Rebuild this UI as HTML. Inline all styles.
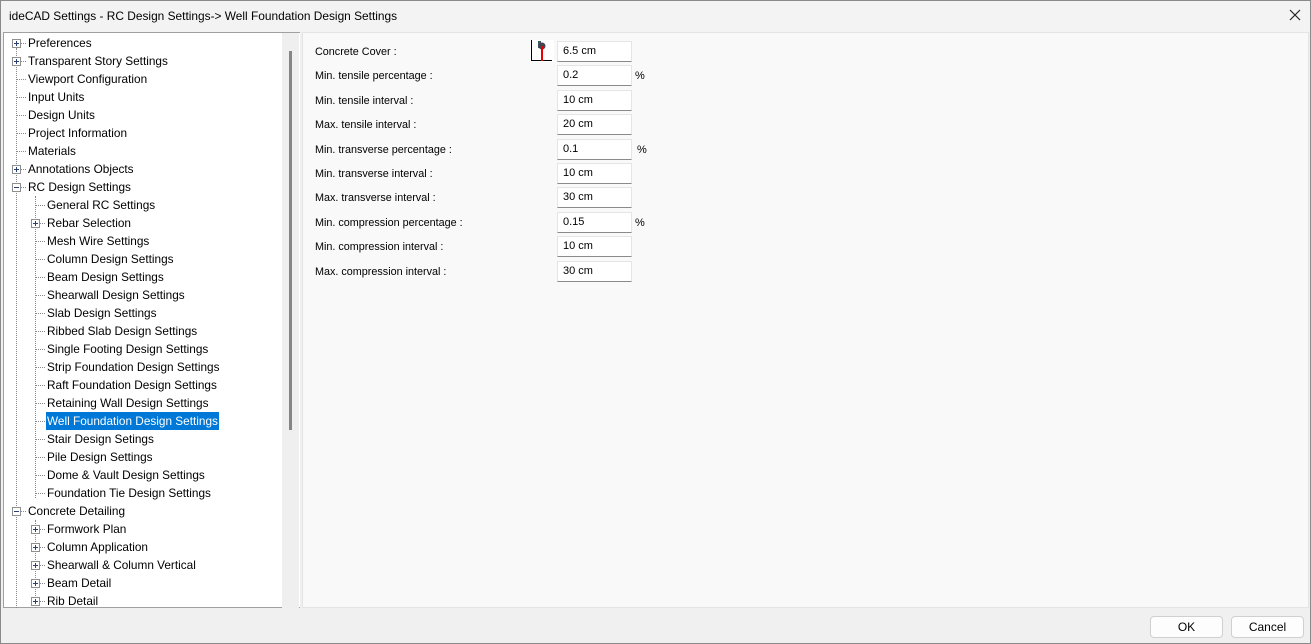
<!DOCTYPE html>
<html><head><meta charset="utf-8"><style>
*{margin:0;padding:0;box-sizing:border-box}
body{width:1311px;height:644px;background:#f0f0f0;font-family:"Liberation Sans",sans-serif;position:relative;overflow:hidden}
.a{position:absolute;white-space:nowrap}
#frame{left:0;top:0;width:1311px;height:644px;border:1px solid #8a8a8a;z-index:5;pointer-events:none}
#title{left:0;top:0;width:1311px;height:32px;background:#f3f3f3}
#tree{left:3px;top:32px;width:297px;height:576px;background:#fff;border:1px solid #a0a0a0;border-right:none;overflow:hidden}
#sb{left:282px;top:33px;width:17px;height:575px;background:#efefef}
#thumb{left:289px;top:51px;width:3px;height:379px;background:#858585}
#right{left:302px;top:32px;width:1007px;height:576px;background:#f9f9f9;border:1px solid #e4e4e4}
.t{font-size:11.8px;color:#000;height:18px;line-height:18px}
.pm{width:9px;height:9px;border:1px solid #8e8f8f;background:#fff;font-size:0}
.pm:before{content:"";position:absolute;left:1px;top:3px;width:5px;height:1px;background:#2a3f7a}
.pm.p:after{content:"";position:absolute;left:3px;top:1px;width:1px;height:5px;background:#2a3f7a}
.dh{height:0;border-top:1px dotted #888}
.dv{width:0;border-left:1px dotted #888}
.lb{font-size:11px;color:#000}
.in{width:75px;height:21px;background:#fff;border:1px solid #e5e5e5;border-bottom:1px solid #8a8a8a;font-size:11px;padding-left:5px;line-height:19px}
.btn{height:22px;width:73px;background:#fdfdfd;border:1px solid #d0d0d0;border-radius:4px;font-size:12px;text-align:center;line-height:20px}
</style></head><body>
<div class="a" id="title"></div>
<div class="a" style="left:9px;top:9px;font-size:11.9px;color:#000">ideCAD Settings - RC Design Settings-&gt; Well Foundation Design Settings</div>
<svg class="a" style="left:1289px;top:9px" width="12" height="12"><path d="M1 1L11 11M11 1L1 11" stroke="#222" stroke-width="1.2"/></svg>
<div class="a" id="tree"></div>
<div class="a" id="sb"></div>
<div class="a" id="thumb"></div>
<div class="a" id="right"></div>

<div class="a dv" style="left:16px;top:48px;height:560px"></div>
<div class="a dv" style="left:35px;top:196px;height:302px"></div>
<div class="a dv" style="left:35px;top:520px;height:88px"></div>

<div id="tr"></div>
<script>
var items=[[1,"Preferences",1],[1,"Transparent Story Settings",1],[1,"Viewport Configuration",0],[1,"Input Units",0],[1,"Design Units",0],[1,"Project Information",0],[1,"Materials",0],[1,"Annotations Objects",1],[1,"RC Design Settings",2],
[2,"General RC Settings",0],[2,"Rebar Selection",1],[2,"Mesh Wire Settings",0],[2,"Column Design Settings",0],[2,"Beam Design Settings",0],[2,"Shearwall Design Settings",0],[2,"Slab Design Settings",0],[2,"Ribbed Slab Design Settings",0],[2,"Single Footing Design Settings",0],[2,"Strip Foundation Design Settings",0],[2,"Raft Foundation Design Settings",0],[2,"Retaining Wall Design Settings",0],[2,"Well Foundation Design Settings",0],[2,"Stair Design Setings",0],[2,"Pile Design Settings",0],[2,"Dome & Vault Design Settings",0],[2,"Foundation Tie Design Settings",0],
[1,"Concrete Detailing",2],[2,"Formwork Plan",1],[2,"Column Application",1],[2,"Shearwall & Column Vertical",1],[2,"Beam Detail",1],[2,"Rib Detail",1]];
var h="";
items.forEach(function(it,i){var cy=43+i*18;var lx=it[0]==1?16:35;var tx=it[0]==1?28:47;
h+='<div class="a dh" style="left:'+lx+'px;top:'+cy+'px;width:'+(tx-lx-2)+'px"></div>';
if(it[2])h+='<div class="a pm'+(it[2]==1?' p':'')+'" style="left:'+(lx-4)+'px;top:'+(cy-4)+'px"></div>';
var sel=i==21;
h+='<div class="a t" style="left:'+(tx-1)+'px;top:'+(cy-9)+'px;padding:0 1px;'+(sel?'background:#0078d7;color:#fff':'')+'">'+it[1].replace('&','&amp;')+'</div>';});
document.getElementById('tr').innerHTML=h;
var f=[["Concrete Cover :","6.5 cm",""],["Min. tensile percentage :","0.2","%"],["Min. tensile interval :","10 cm",""],["Max. tensile interval :","20 cm",""],["Min. transverse percentage :","0.1","%"],["Min. transverse interval :","10 cm",""],["Max. transverse interval :","30 cm",""],["Min. compression percentage :","0.15","%"],["Min. compression interval :","10 cm",""],["Max. compression interval :","30 cm",""]];
var g="";f.forEach(function(r,i){var cy=51+i*24.4;
g+='<div class="a lb" style="left:315px;top:'+(cy-5)+'px;font-size:10.8px">'+r[0]+'</div>';
g+='<div class="a in" style="left:557px;top:'+(cy-10)+'px">'+r[1]+'</div>';
if(r[2])g+='<div class="a lb" style="left:'+(i==4?637:635)+'px;top:'+(cy-5)+'px">%</div>';});
document.getElementById('tr').innerHTML+=g;
</script>
<svg class="a" style="left:530px;top:40px;width:24px;height:22px" width="24" height="22" viewBox="0 0 24 22"><rect width="24" height="22" fill="#fff"/><path d="M1.5 0V20.5H22" stroke="#000" fill="none"/><rect x="8" y="1" width="3" height="7" fill="#3c5a5a"/><circle cx="12" cy="6" r="3.5" fill="#445"/><path d="M12 6V21" stroke="#e00" stroke-width="2"/></svg>
<div class="a btn" style="left:1150px;top:616px">OK</div>
<div class="a btn" style="left:1231px;top:616px">Cancel</div>
<div class="a" id="frame"></div>
</body></html>
